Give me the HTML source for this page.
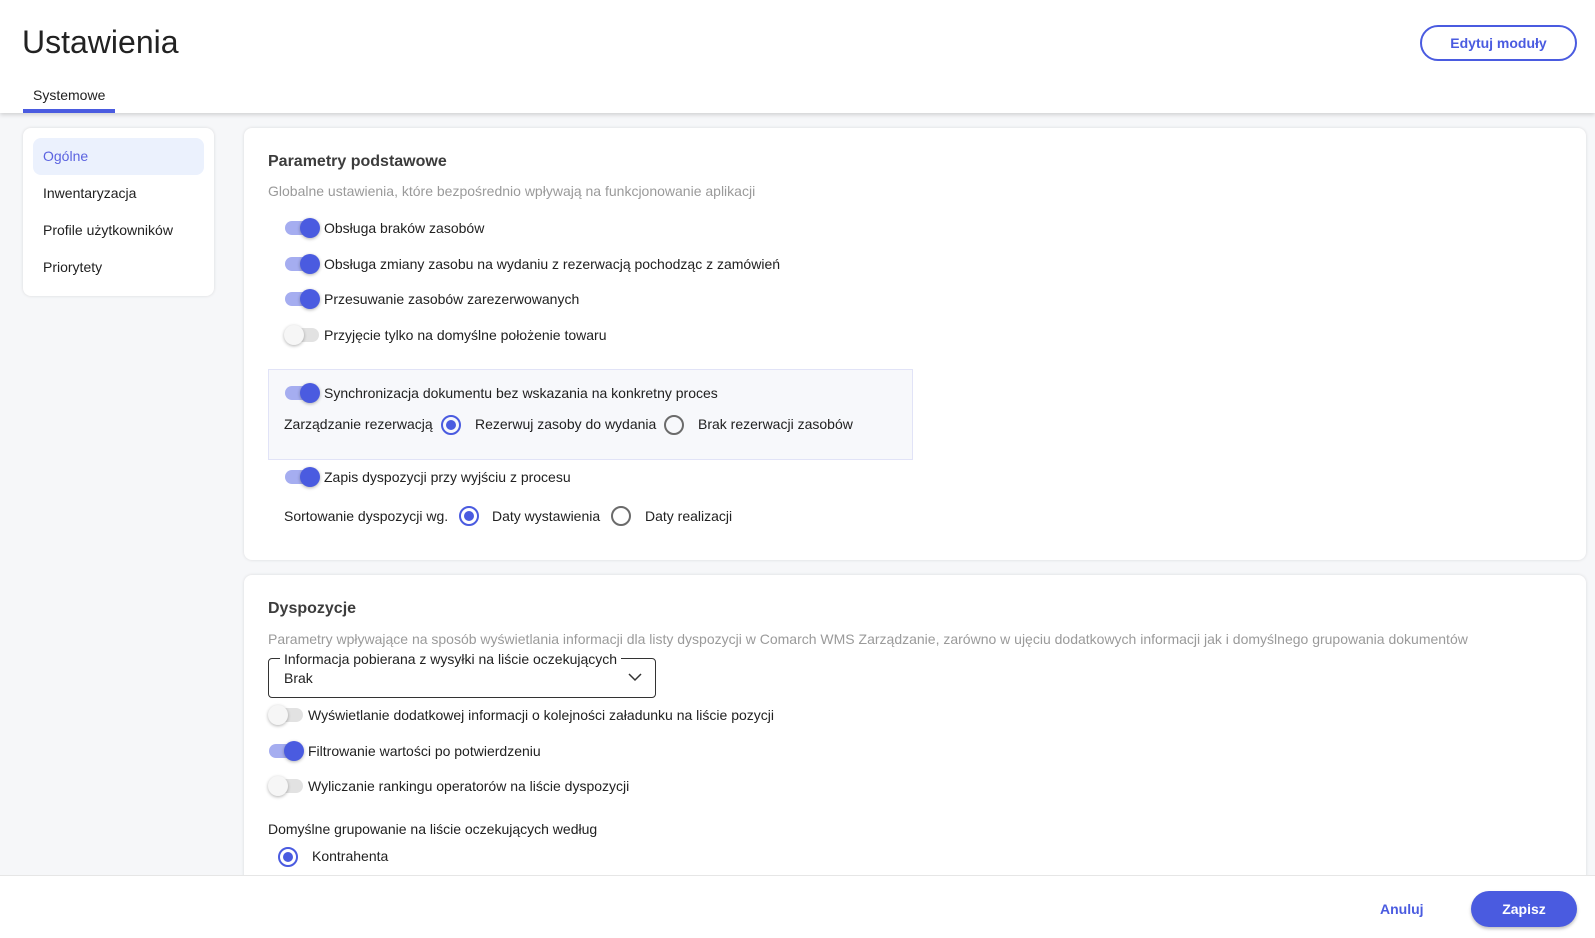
<!DOCTYPE html>
<html><head><meta charset="utf-8"><style>
*{box-sizing:border-box;margin:0;padding:0}
body{width:1595px;height:938px;overflow:hidden;background:#f6f7f9;font-family:"Liberation Sans",Arial,sans-serif;font-size:14px;color:#212121;position:relative}
.a{position:absolute;white-space:nowrap}
.hdr{position:absolute;left:0;top:0;width:1595px;height:113px;background:#fff;box-shadow:0 2px 4px rgba(0,0,0,.15)}
.card{position:absolute;background:#fff;border-radius:8px;box-shadow:0 0 3px rgba(0,0,0,.12)}
.tg{position:absolute;width:36px;height:20px}
.tg .tr{position:absolute;left:1px;top:3px;width:34px;height:14px;border-radius:7px;background:#a5adf0}
.tg .th{position:absolute;left:16px;top:0;width:20px;height:20px;border-radius:50%;background:#4a5be0;box-shadow:0 1px 3px rgba(0,0,0,.3)}
.tg.off .tr{background:#e2e2e2}
.tg.off .th{left:0;background:#f6f6f6}
.rd{position:absolute;width:20px;height:20px;border-radius:50%;border:2px solid #6b6b6b}
.rd.on{border-color:#4a5be0}
.rd.on::after{content:"";position:absolute;left:3px;top:3px;width:10px;height:10px;border-radius:50%;background:#4a5be0}
.lbl{position:absolute;white-space:nowrap;line-height:20px}
</style></head><body>
<div class="hdr">
<div class="a" style="left:22px;top:24px;font-size:32px;color:#222">Ustawienia</div>
<div class="a" style="left:1420px;top:25px;width:157px;height:36px;border:2px solid #4a5be0;border-radius:18px;color:#4a5be0;font-weight:bold;text-align:center;line-height:32px;font-size:14px">Edytuj moduły</div>
<div class="a" style="left:33px;top:87px;font-size:14px">Systemowe</div>
<div class="a" style="left:23px;top:109px;width:92px;height:4px;background:#4a5be0"></div>
</div>

<div class="card" style="left:23px;top:128px;width:191px;height:168px">
<div class="a" style="left:10px;top:10px;width:171px;height:37px;background:#ebf1fd;border-radius:8px"></div>
<div class="lbl" style="left:20px;top:18px;color:#5b63e0">Ogólne</div>
<div class="lbl" style="left:20px;top:55px">Inwentaryzacja</div>
<div class="lbl" style="left:20px;top:92px">Profile użytkowników</div>
<div class="lbl" style="left:20px;top:129px">Priorytety</div>
</div>

<div class="card" style="left:244px;top:128px;width:1342px;height:432px"></div>
<div class="lbl" style="left:268px;top:152px;font-size:16px;font-weight:bold;color:#3c3c3c">Parametry podstawowe</div>
<div class="lbl" style="left:268px;top:181px;color:#9a9a9a">Globalne ustawienia, które bezpośrednio wpływają na funkcjonowanie aplikacji</div>

<div class="tg" style="left:284px;top:218px"><div class="tr"></div><div class="th"></div></div>
<div class="lbl" style="left:324px;top:218px">Obsługa braków zasobów</div>
<div class="tg" style="left:284px;top:254px"><div class="tr"></div><div class="th"></div></div>
<div class="lbl" style="left:324px;top:254px">Obsługa zmiany zasobu na wydaniu z rezerwacją pochodząc z zamówień</div>
<div class="tg" style="left:284px;top:289px"><div class="tr"></div><div class="th"></div></div>
<div class="lbl" style="left:324px;top:289px">Przesuwanie zasobów zarezerwowanych</div>
<div class="tg off" style="left:284px;top:325px"><div class="tr"></div><div class="th"></div></div>
<div class="lbl" style="left:324px;top:325px">Przyjęcie tylko na domyślne położenie towaru</div>

<div class="a" style="left:268px;top:369px;width:645px;height:91px;background:#f7f8fb;border:1px solid #e1e3f7"></div>
<div class="tg" style="left:284px;top:383px"><div class="tr"></div><div class="th"></div></div>
<div class="lbl" style="left:324px;top:383px">Synchronizacja dokumentu bez wskazania na konkretny proces</div>
<div class="lbl" style="left:284px;top:414px">Zarządzanie rezerwacją</div>
<div class="rd on" style="left:441px;top:415px"></div>
<div class="lbl" style="left:475px;top:414px">Rezerwuj zasoby do wydania</div>
<div class="rd" style="left:664px;top:415px"></div>
<div class="lbl" style="left:698px;top:414px">Brak rezerwacji zasobów</div>

<div class="tg" style="left:284px;top:467px"><div class="tr"></div><div class="th"></div></div>
<div class="lbl" style="left:324px;top:467px">Zapis dyspozycji przy wyjściu z procesu</div>
<div class="lbl" style="left:284px;top:506px">Sortowanie dyspozycji wg.</div>
<div class="rd on" style="left:459px;top:506px"></div>
<div class="lbl" style="left:492px;top:506px">Daty wystawienia</div>
<div class="rd" style="left:611px;top:506px"></div>
<div class="lbl" style="left:645px;top:506px">Daty realizacji</div>

<div class="card" style="left:244px;top:575px;width:1342px;height:320px"></div>
<div class="lbl" style="left:268px;top:599px;font-size:16px;font-weight:bold;color:#3c3c3c">Dyspozycje</div>
<div class="lbl" style="left:268px;top:629px;color:#9a9a9a">Parametry wpływające na sposób wyświetlania informacji dla listy dyspozycji w Comarch WMS Zarządzanie, zarówno w ujęciu dodatkowych informacji jak i domyślnego grupowania dokumentów</div>
<div class="a" style="left:268px;top:658px;width:388px;height:40px;border:1px solid #333;border-radius:4px"></div>
<div class="lbl" style="left:280px;top:649px;background:#fff;padding:0 4px">Informacja pobierana z wysyłki na liście oczekujących</div>
<div class="lbl" style="left:284px;top:668px">Brak</div>
<svg class="a" style="left:628px;top:672px" width="14" height="10" viewBox="0 0 14 10"><path d="M1 2l6 6 6-6" fill="none" stroke="#333" stroke-width="1.5"/></svg>

<div class="tg off" style="left:268px;top:705px"><div class="tr"></div><div class="th"></div></div>
<div class="lbl" style="left:308px;top:705px">Wyświetlanie dodatkowej informacji o kolejności załadunku na liście pozycji</div>
<div class="tg" style="left:268px;top:741px"><div class="tr"></div><div class="th"></div></div>
<div class="lbl" style="left:308px;top:741px">Filtrowanie wartości po potwierdzeniu</div>
<div class="tg off" style="left:268px;top:776px"><div class="tr"></div><div class="th"></div></div>
<div class="lbl" style="left:308px;top:776px">Wyliczanie rankingu operatorów na liście dyspozycji</div>
<div class="lbl" style="left:268px;top:819px">Domyślne grupowanie na liście oczekujących według</div>
<div class="rd on" style="left:278px;top:847px"></div>
<div class="lbl" style="left:312px;top:846px">Kontrahenta</div>

<div class="a" style="left:0;top:875px;width:1595px;height:63px;background:#fff;border-top:1px solid #e6e6e6"></div>
<div class="lbl" style="left:1380px;top:899px;color:#4a5be0;font-weight:bold">Anuluj</div>
<div class="a" style="left:1471px;top:891px;width:106px;height:36px;border-radius:18px;background:#4a5be0;color:#fff;font-weight:bold;text-align:center;line-height:36px;box-shadow:0 2px 3px rgba(0,0,0,.25)">Zapisz</div>
</body></html>
